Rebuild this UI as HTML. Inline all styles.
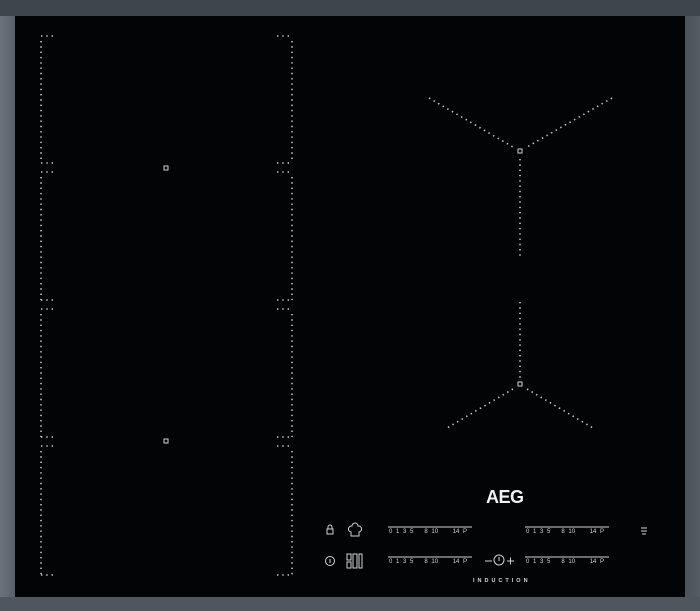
<!DOCTYPE html><html><head><style>
html,body{margin:0;padding:0;background:#4b5159;}
body{width:700px;height:611px;overflow:hidden;position:relative;font-family:"Liberation Sans",sans-serif;}
.frame{position:absolute;left:0;top:0;width:700px;height:611px;background:linear-gradient(90deg,#6b747d 0,#58606a 15px,#3c4249 40px,#3c4249 660px,#555c64 700px);}
.top{position:absolute;left:0;top:0;width:700px;height:16px;background:#3f454c;}
.bot{position:absolute;left:0;top:597px;width:700px;height:14px;background:#4f565e;}
.glass{position:absolute;left:15px;top:16px;width:670px;height:581px;background:#030406;}
.t{position:absolute;color:#d8d8d8;}
</style></head><body>
<div class="frame"></div><div class="top"></div><div class="bot"></div>
<div class="glass"></div>
<svg width="700" height="611" style="position:absolute;left:0;top:0">
<g stroke="#c4c8cb" stroke-width="1.6" stroke-dasharray="1.4 3.9" fill="none">
<line x1="41" y1="36" x2="56" y2="36"/><line x1="277" y1="36" x2="292" y2="36"/>
<line x1="41" y1="163" x2="56" y2="163"/><line x1="277" y1="163" x2="292" y2="163"/>
<line x1="41" y1="172" x2="56" y2="172"/><line x1="277" y1="172" x2="292" y2="172"/>
<line x1="41" y1="300" x2="56" y2="300"/><line x1="277" y1="300" x2="292" y2="300"/>
<line x1="41" y1="309" x2="56" y2="309"/><line x1="277" y1="309" x2="292" y2="309"/>
<line x1="41" y1="437" x2="56" y2="437"/><line x1="277" y1="437" x2="292" y2="437"/>
<line x1="41" y1="446" x2="56" y2="446"/><line x1="277" y1="446" x2="292" y2="446"/>
<line x1="41" y1="575" x2="56" y2="575"/><line x1="277" y1="575" x2="292" y2="575"/>
<line x1="41" y1="41" x2="41" y2="163"/><line x1="292" y1="41" x2="292" y2="163"/>
<line x1="41" y1="177" x2="41" y2="300"/><line x1="292" y1="177" x2="292" y2="300"/>
<line x1="41" y1="314" x2="41" y2="437"/><line x1="292" y1="314" x2="292" y2="437"/>
<line x1="41" y1="451" x2="41" y2="575"/><line x1="292" y1="451" x2="292" y2="575"/>
<line x1="429" y1="98" x2="513" y2="147"/><line x1="612" y1="98" x2="527" y2="147"/>
<line x1="520" y1="159" x2="520" y2="258"/><line x1="520" y1="302" x2="520" y2="380"/>
<line x1="513" y1="389" x2="447" y2="428"/><line x1="527" y1="389" x2="593" y2="428"/>
</g>
<g stroke="#cfd3d6" stroke-width="1" fill="none">
<rect x="164" y="166" width="4" height="4"/><rect x="164" y="439" width="4" height="4"/>
<rect x="518" y="149" width="4" height="4"/><rect x="518" y="382" width="4" height="4"/>
<rect x="327" y="529" width="6" height="5"/><path d="M328 529v-2a2 2 0 0 1 4 0v2"/>
<path d="M351 536h8v-4a3 3 0 0 0 -1 -6a3 3 0 0 0 -6 0a3 3 0 0 0 -1 6z"/>
<circle cx="330" cy="561" r="4.5"/><line x1="330" y1="559" x2="330" y2="563"/>
<rect x="347" y="554" width="4" height="6"/><rect x="347" y="562" width="4" height="6"/><rect x="353" y="554" width="4" height="14"/><rect x="359" y="554" width="3" height="14"/>
<line x1="485" y1="561" x2="492" y2="561"/><circle cx="499" cy="560" r="5"/><line x1="499" y1="557" x2="499" y2="561"/>
<line x1="507" y1="561" x2="514" y2="561"/><line x1="510.5" y1="557.5" x2="510.5" y2="564.5"/>
<path d="M641 528h6M641 531h6M642 534h4" />
<line x1="388" y1="527" x2="472" y2="527"/><line x1="525" y1="527" x2="609" y2="527"/>
<line x1="388" y1="557" x2="472" y2="557"/><line x1="525" y1="557" x2="609" y2="557"/>
</g>
</svg>
<div class="t" style="left:486px;top:487px;font-size:18px;font-weight:bold;color:#f2f2f2;letter-spacing:-0.5px">AEG</div>
<div class="t" style="left:389px;top:529px;font-size:6px;word-spacing:2px">0 1 3 5 &nbsp; 8 10 &nbsp; &nbsp;14 P</div>
<div class="t" style="left:526px;top:529px;font-size:6px;word-spacing:2px">0 1 3 5 &nbsp; 8 10 &nbsp; &nbsp;14 P</div>
<div class="t" style="left:389px;top:559px;font-size:6px;word-spacing:2px">0 1 3 5 &nbsp; 8 10 &nbsp; &nbsp;14 P</div>
<div class="t" style="left:526px;top:559px;font-size:6px;word-spacing:2px">0 1 3 5 &nbsp; 8 10 &nbsp; &nbsp;14 P</div>
<div class="t" style="left:473px;top:578px;font-size:5.5px;font-weight:bold;letter-spacing:3px">INDUCTION</div>
</body></html>
